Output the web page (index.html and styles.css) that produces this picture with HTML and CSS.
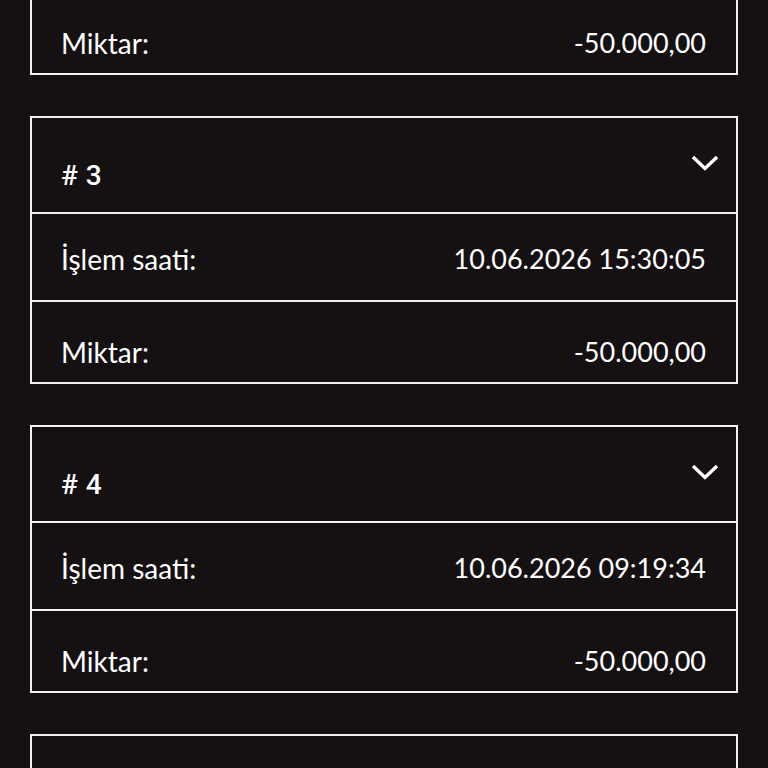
FILE: index.html
```html
<!DOCTYPE html>
<html lang="tr">
<head>
<meta charset="utf-8">
<link rel="stylesheet" href="styles.css">
</head>
<body>
<main class="list">
  <section class="card">
    <div class="card-head"><span class="num"># 2</span><svg class="chev" viewBox="0 0 28 16"><path d="M2 2 L14 13.5 L26 2" fill="none" stroke="#fff" stroke-width="3.4"/></svg></div>
    <div class="row row-time"><span class="label">İşlem saati:</span><span class="value">10.06.2026 16:02:11</span></div>
    <div class="row row-amount"><span class="label">Miktar:</span><span class="value">-50.000,00</span></div>
  </section>
  <section class="card">
    <div class="card-head"><span class="num"># 3</span><svg class="chev" viewBox="0 0 28 16"><path d="M2 2 L14 13.5 L26 2" fill="none" stroke="#fff" stroke-width="3.4"/></svg></div>
    <div class="row row-time"><span class="label">İşlem saati:</span><span class="value">10.06.2026 15:30:05</span></div>
    <div class="row row-amount"><span class="label">Miktar:</span><span class="value">-50.000,00</span></div>
  </section>
  <section class="card">
    <div class="card-head"><span class="num"># 4</span><svg class="chev" viewBox="0 0 28 16"><path d="M2 2 L14 13.5 L26 2" fill="none" stroke="#fff" stroke-width="3.4"/></svg></div>
    <div class="row row-time"><span class="label">İşlem saati:</span><span class="value">10.06.2026 09:19:34</span></div>
    <div class="row row-amount"><span class="label">Miktar:</span><span class="value">-50.000,00</span></div>
  </section>
  <section class="card">
    <div class="card-head"><span class="num"># 5</span><svg class="chev" viewBox="0 0 28 16"><path d="M2 2 L14 13.5 L26 2" fill="none" stroke="#fff" stroke-width="3.4"/></svg></div>
    <div class="row row-time"><span class="label">İşlem saati:</span><span class="value">09.06.2026 18:44:20</span></div>
    <div class="row row-amount"><span class="label">Miktar:</span><span class="value">-50.000,00</span></div>
  </section>
</main>
</body>
</html>
```
FILE: styles.css
```css
html, body {
  margin: 0;
  padding: 0;
  background: #151112;
  color: #fff;
  font-family: Lato, "Open Sans", sans-serif;
  overflow: hidden;
  height: 768px;
}
.list {
  display: flex;
  flex-direction: column;
  gap: 41px;
  padding: 0 30px;
  margin-top: -193px;
}
.card {
  border: 2px solid #f2f0f0;
  display: flex;
  flex-direction: column;
}
.card-head {
  height: 96px;
  box-sizing: border-box;
  display: flex;
  justify-content: space-between;
  align-items: flex-start;
  padding: 42px 17px 0 29px;
  border-bottom: 2px solid #f2f0f0;
}
.num {
  font-family: Roboto, "Liberation Sans", sans-serif;
  font-weight: 500;
  font-size: 28px;
  line-height: 32px;
  word-spacing: 1px;
}
.chev {
  width: 28px;
  height: 16px;
  margin-top: -5px;
}
.row {
  display: flex;
  justify-content: space-between;
  align-items: flex-start;
  box-sizing: border-box;
  padding: 0 30px 0 29px;
  line-height: 32px;
}
.label {
  font-size: 28px;
}
.value {
  font-size: 27px;
}
.row-time {
  height: 88px;
  padding-top: 29px;
  border-bottom: 2px solid #f2f0f0;
}
.row-amount {
  height: 80px;
  padding-top: 34px;
}
```
